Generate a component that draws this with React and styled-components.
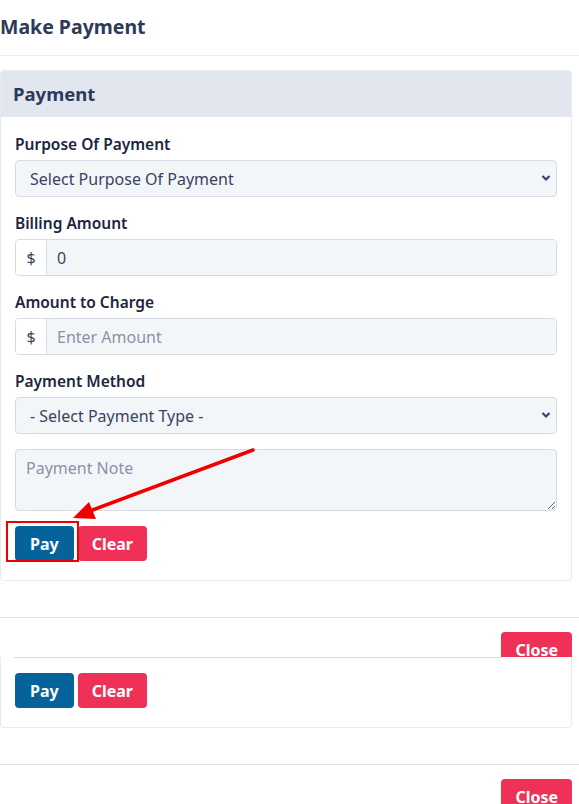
import React from "react";
import styled, { createGlobalStyle } from "styled-components";

const GlobalStyle = createGlobalStyle`
  html, body {
    margin: 0;
    padding: 0;
    background: #fff;
  }
  body {
    font-family: "Noto Sans", "Open Sans", sans-serif;
    color: #1f2a44;
  }
  * {
    box-sizing: border-box;
  }
`;

const Page = styled.div`
  position: relative;
  width: 579px;
`;

const Title = styled.h2`
  margin: 0;
  padding: 12px 0 13px;
  font-size: 19.5px;
  line-height: 30px;
  font-weight: 700;
  color: #2e3a59;
  border-bottom: 1px solid #eceef3;
`;

const Card = styled.div`
  margin: 14px 7px 0 0;
  border: 1px solid #e8eaf2;
  border-radius: 4px;
  overflow: hidden;
`;

const CardHeader = styled.div`
  background: #e2e6ef;
  padding: 8px 12px;
  font-size: 18.5px;
  line-height: 30px;
  font-weight: 700;
  color: #2e3a59;
`;

const CardBody = styled.div`
  padding: 16px 14px 19px;
  display: flex;
  flex-direction: column;
`;

const Field = styled.div`
  display: flex;
  flex-direction: column;
  margin-bottom: 15px;
`;

const Label = styled.label`
  font-size: 15.5px;
  line-height: 22px;
  font-weight: 600;
  color: #1c2541;
  margin-bottom: 5px;
`;

const SelectWrap = styled.div`
  position: relative;
`;

const Select = styled.select`
  appearance: none;
  width: 100%;
  height: 37px;
  padding: 0 34px 0 14px;
  font-family: inherit;
  font-size: 16px;
  color: #3b4262;
  background: #f3f6f9;
  border: 1px solid #d6dce4;
  border-radius: 4px;
  outline: none;
`;

const Chevron = styled.svg`
  position: absolute;
  right: 6px;
  top: 14px;
  width: 10px;
  height: 8px;
  pointer-events: none;
`;

const InputGroup = styled.div`
  display: flex;
  height: 37px;
  border: 1px solid #d6dce4;
  border-radius: 4px;
  overflow: hidden;
`;

const Addon = styled.span`
  width: 31px;
  display: flex;
  align-items: center;
  justify-content: center;
  background: #fff;
  border-right: 1px solid #d6dce4;
  font-size: 16px;
  color: #3b4262;
`;

const Input = styled.input`
  flex: 1;
  min-width: 0;
  border: none;
  outline: none;
  background: #f3f6f9;
  padding: 0 10px;
  font-family: inherit;
  font-size: 16px;
  color: #3b4262;
  &::placeholder {
    color: #8d91a8;
  }
`;

const Note = styled.textarea`
  display: block;
  width: 100%;
  height: 62px;
  margin-bottom: 15px;
  padding: 6px 10px;
  font-family: inherit;
  font-size: 16px;
  line-height: 24px;
  background: #f3f6f9;
  border: 1px solid #d6dce4;
  border-radius: 4px;
  resize: vertical;
  outline: none;
  &::placeholder {
    color: #8d91a8;
  }
`;

const Actions = styled.div`
  display: flex;
  gap: 4px;
`;

const Button = styled.button`
  height: 35px;
  padding: 0 ${(p) => (p.$variant === "danger" ? "14px" : "15px")};
  border: none;
  border-radius: 4px;
  font-family: inherit;
  font-size: 16px;
  font-weight: 700;
  color: #fff;
  background: ${(p) => (p.$variant === "danger" ? "#ef3158" : "#05639c")};
  cursor: pointer;
`;

const Footer = styled.div`
  margin-top: 36px;
  height: 40px;
  border-top: 1px solid #dfe2e8;
  overflow: hidden;
  display: flex;
  justify-content: flex-end;
  padding: 14px 7px 0 0;
`;

const Remnant = styled.div`
  margin-right: 7px;
  border: 1px solid #e8eaf2;
  border-top: none;
  border-radius: 0 0 4px 4px;
  padding: 0 14px 19px;
`;

const EdgeLine = styled.div`
  height: 1px;
  width: 488px;
  margin-left: -1px;
  margin-bottom: 15px;
  background: #d3d9e3;
`;

const LastFooter = styled(Footer)`
  height: 60px;
`;

const Annotation = styled.svg`
  position: absolute;
  left: 0;
  top: 0;
  width: 579px;
  height: 600px;
  pointer-events: none;
`;

function ChevronDown() {
  return (
    <Chevron viewBox="0 0 10 8">
      <path d="M1.5 2 L5 5.5 L8.5 2" fill="none" stroke="#3a3f6b" strokeWidth="2.2" />
    </Chevron>
  );
}

export default function App() {
  return (
    <>
      <GlobalStyle />
      <Page>
        <Title>Make Payment</Title>
        <Card>
          <CardHeader>Payment</CardHeader>
          <CardBody>
            <Field>
              <Label>Purpose Of Payment</Label>
              <SelectWrap>
                <Select defaultValue="">
                  <option value="">Select Purpose Of Payment</option>
                </Select>
                <ChevronDown />
              </SelectWrap>
            </Field>
            <Field>
              <Label>Billing Amount</Label>
              <InputGroup>
                <Addon>$</Addon>
                <Input defaultValue="0" />
              </InputGroup>
            </Field>
            <Field>
              <Label>Amount to Charge</Label>
              <InputGroup>
                <Addon>$</Addon>
                <Input placeholder="Enter Amount" />
              </InputGroup>
            </Field>
            <Field>
              <Label>Payment Method</Label>
              <SelectWrap>
                <Select defaultValue="">
                  <option value="">- Select Payment Type -</option>
                </Select>
                <ChevronDown />
              </SelectWrap>
            </Field>
            <Note placeholder="Payment Note" />
            <Actions>
              <Button>Pay</Button>
              <Button $variant="danger">Clear</Button>
            </Actions>
          </CardBody>
        </Card>
        <Footer>
          <Button $variant="danger">Close</Button>
        </Footer>
        <Remnant>
          <EdgeLine />
          <Actions>
            <Button>Pay</Button>
            <Button $variant="danger">Clear</Button>
          </Actions>
        </Remnant>
        <LastFooter>
          <Button $variant="danger">Close</Button>
        </LastFooter>
        <Annotation viewBox="0 0 579 600">
          <rect x="7" y="522" width="71" height="39" fill="none" stroke="#ee0000" strokeWidth="2" />
          <line x1="253" y1="450" x2="90" y2="511" stroke="#ee0000" strokeWidth="3.5" strokeLinecap="round" />
          <polygon points="73,518 89,502 96,519" fill="#ee0000" />
        </Annotation>
      </Page>
    </>
  );
}
